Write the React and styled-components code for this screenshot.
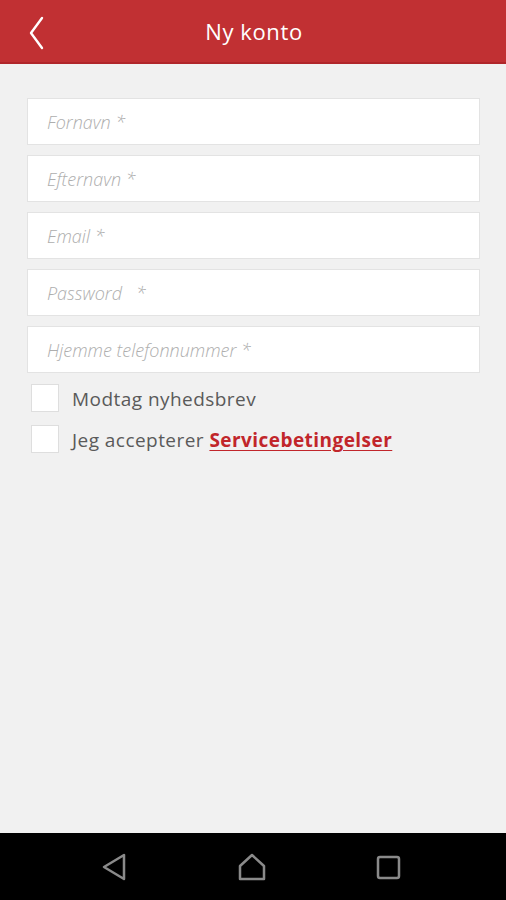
import React from 'react'
import styled, { createGlobalStyle } from 'styled-components'

const GlobalStyle = createGlobalStyle`
  html, body { margin: 0; padding: 0; }
  body { font-family: "Open Sans", Lato, sans-serif; background: #f1f1f1; }
  * { box-sizing: border-box; }
`

const Screen = styled.div`
  width: 506px;
  height: 900px;
  display: flex;
  flex-direction: column;
  background: #f1f1f1;
`

const Header = styled.header`
  height: 64px;
  background: #c13033;
  border-bottom: 2px solid #b0262a;
  display: flex;
  align-items: center;
  position: relative;
  justify-content: center;
`

const BackButton = styled.button`
  position: absolute;
  left: 24px;
  top: 15px;
  background: none;
  border: 0;
  padding: 0;
  width: 24px;
  height: 36px;
  display: flex;
  align-items: center;
  justify-content: center;
`

const Title = styled.h1`
  margin: 0 0 0 2px;
  color: #fff;
  font-size: 22px;
  font-weight: 400;
  letter-spacing: 0.6px;
`

const Form = styled.form`
  flex: 1;
  display: flex;
  flex-direction: column;
  padding: 34px 26px 0 27px;
  gap: 10px;
`

const Field = styled.input`
  height: 47px;
  width: 100%;
  background: #fff;
  border: 1px solid #e3e3e3;
  padding: 0 19px;
  font-family: "Open Sans", Lato, sans-serif;
  font-size: 18px;
  font-style: italic;
  font-weight: 300;
  color: #555;
  outline: none;
  &::placeholder { color: #aeaeae; }
`

const CheckList = styled.div`
  display: flex;
  flex-direction: column;
  gap: 13px;
  margin-top: 1px;
  padding-left: 4px;
`

const CheckRow = styled.label`
  display: flex;
  align-items: center;
  gap: 13px;
  font-size: 19px;
  letter-spacing: 0.45px;
  color: #5a5a5a;
  padding-top: 2px;
`

const Box = styled.span`
  width: 28px;
  height: 28px;
  background: #fff;
  border: 1px solid #dedede;
  flex-shrink: 0;
  margin-top: -2px;
`

const Link = styled.a`
  color: #c1262b;
  font-weight: 700;
  text-decoration: underline;
  text-underline-offset: 3px;
`

const NavBar = styled.nav`
  height: 67px;
  background: #000;
  display: flex;
  align-items: center;
  justify-content: space-between;
  padding: 0 103px 0 100px;
`

const NavIcon = styled.svg`
  width: 30px;
  height: 30px;
  fill: none;
  stroke: #8a8a8a;
  stroke-width: 2.5;
  stroke-linejoin: round;
`

const fields = ['Fornavn *', 'Efternavn *', 'Email *', 'Password   *', 'Hjemme telefonnummer *']

export default function App() {
  return (
    <>
      <GlobalStyle />
      <Screen>
        <Header>
          <BackButton aria-label="Tilbage">
            <svg width="18" height="34" viewBox="0 0 18 34">
              <path d="M15 2 L4 17 L15 32" fill="none" stroke="#fff" strokeWidth="2.4" strokeLinecap="round" strokeLinejoin="round" />
            </svg>
          </BackButton>
          <Title>Ny konto</Title>
        </Header>
        <Form>
          {fields.map((f) => (
            <Field key={f} placeholder={f} />
          ))}
          <CheckList>
            <CheckRow>
              <Box />
              Modtag nyhedsbrev
            </CheckRow>
            <CheckRow>
              <Box />
              <span>Jeg accepterer <Link>Servicebetingelser</Link></span>
            </CheckRow>
          </CheckList>
        </Form>
        <NavBar>
          <NavIcon viewBox="0 0 30 30">
            <path d="M24 3 L24 27 L4 15 Z" />
          </NavIcon>
          <NavIcon viewBox="0 0 30 30">
            <path d="M15 3 L27 14 L27 27 L3 27 L3 14 Z" />
          </NavIcon>
          <NavIcon viewBox="0 0 30 30">
            <rect x="5" y="5" width="21" height="21" rx="2" />
          </NavIcon>
        </NavBar>
      </Screen>
    </>
  )
}
